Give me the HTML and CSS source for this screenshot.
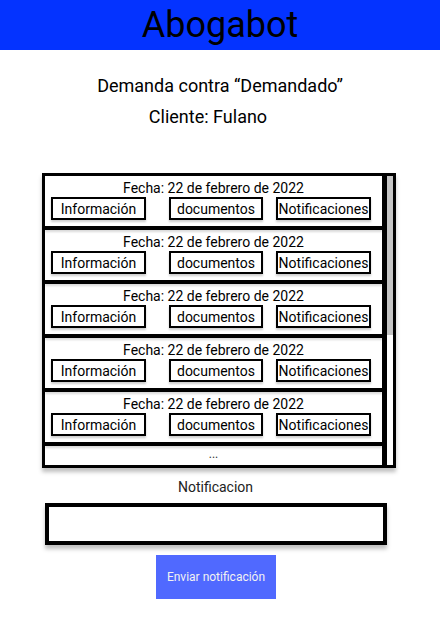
FILE: index.html
```html
<!DOCTYPE html>
<html lang="es">

<head>
  <meta charset="utf-8">
  <meta name="viewport" content="width=device-width, initial-scale=1">
  <title>Abogabot</title>
  <link rel="stylesheet" href="styles.css">
</head>

<body>
  <header class="topbar">Abogabot</header>

  <div class="case">
    <p class="case-title">Demanda contra “Demandado”</p>
    <p class="case-client">Cliente: Fulano</p>
  </div>

  <div class="history">
    <div class="history-list">
      <div class="entry">
        <p class="entry-date">Fecha: 22 de febrero de 2022</p>
        <div class="entry-tabs">
          <button type="button" class="tab">Información</button>
          <button type="button" class="tab tab-docs">documentos</button>
          <button type="button" class="tab tab-notes">Notificaciones</button>
        </div>
      </div>
      <div class="entry">
        <p class="entry-date">Fecha: 22 de febrero de 2022</p>
        <div class="entry-tabs">
          <button type="button" class="tab">Información</button>
          <button type="button" class="tab tab-docs">documentos</button>
          <button type="button" class="tab tab-notes">Notificaciones</button>
        </div>
      </div>
      <div class="entry">
        <p class="entry-date">Fecha: 22 de febrero de 2022</p>
        <div class="entry-tabs">
          <button type="button" class="tab">Información</button>
          <button type="button" class="tab tab-docs">documentos</button>
          <button type="button" class="tab tab-notes">Notificaciones</button>
        </div>
      </div>
      <div class="entry">
        <p class="entry-date">Fecha: 22 de febrero de 2022</p>
        <div class="entry-tabs">
          <button type="button" class="tab">Información</button>
          <button type="button" class="tab tab-docs">documentos</button>
          <button type="button" class="tab tab-notes">Notificaciones</button>
        </div>
      </div>
      <div class="entry">
        <p class="entry-date">Fecha: 22 de febrero de 2022</p>
        <div class="entry-tabs">
          <button type="button" class="tab">Información</button>
          <button type="button" class="tab tab-docs">documentos</button>
          <button type="button" class="tab tab-notes">Notificaciones</button>
        </div>
      </div>
      <div class="entry-more">...</div>
    </div>
    <div class="scrollbar">
      <div class="scrollbar-thumb"></div>
    </div>
  </div>

  <p class="note-label">Notificacion</p>
  <textarea class="note-input" aria-label="Notificacion"></textarea>
  <button type="button" class="send">Enviar notificación</button>
</body>

</html>
```

FILE: styles.css
```css
* {
  margin: 0;
  padding: 0;
  box-sizing: border-box;
}

body {
  font-family: Roboto, 'Liberation Sans', sans-serif;
  color: #000;
  background-color: #fff;
}

.topbar {
  height: 50px;
  background-color: #0433ff;
  font-size: 36px;
  line-height: 50px;
  text-align: center;
}

.case {
  padding-top: 25px;
  font-size: 18px;
  line-height: 21px;
  text-align: center;
}

.case-client {
  margin-top: 10px;
  padding-right: 24px;
}

.history {
  display: flex;
  width: 354px;
  margin: 46px 0 0 42px;
  border: 3px solid #000;
  background-color: #fff;
  box-shadow: 0 4px 4px rgba(0, 0, 0, 0.25);
}

.history-list {
  flex: 1;
}

.entry {
  height: 54px;
  padding: 4px 0 0 6px;
  border-bottom: 4px solid #000;
  box-shadow: 0 2px 2px rgba(0, 0, 0, 0.15);
}

.entry-date {
  font-size: 14px;
  line-height: 17px;
  text-align: center;
  padding-right: 6px;
}

.entry-tabs {
  display: flex;
  gap: 13px;
}

.tab {
  width: 95px;
  height: 23px;
  border: 2px solid #000;
  background-color: #fff;
  font-family: inherit;
  font-size: 14px;
  color: #000;
  box-shadow: 0 2px 2px rgba(0, 0, 0, 0.2);
}

.tab-docs {
  width: 94px;
  margin-left: 10px;
}

.entry-more {
  height: 19px;
  font-size: 12px;
  line-height: 16px;
  text-align: center;
  color: #333;
}

.scrollbar {
  width: 11px;
  border-left: 5px solid #000;
}

.scrollbar-thumb {
  height: 159px;
  background-color: #c4c4c4;
}

.note-label {
  margin-top: 11px;
  font-size: 14px;
  line-height: 16px;
  text-align: center;
  color: #222;
  padding-right: 9px;
}

.note-input {
  display: block;
  width: 342px;
  height: 42px;
  margin: 8px 0 0 45px;
  border: 4px solid #000;
  resize: none;
  font-family: inherit;
  box-shadow: 0 4px 4px rgba(0, 0, 0, 0.25);
}

.send {
  display: block;
  width: 120px;
  height: 44px;
  margin: 10px 0 0 156px;
  border: none;
  background-color: #5069ff;
  color: #f2f2f2;
  font-family: inherit;
  font-size: 12px;
}
```
